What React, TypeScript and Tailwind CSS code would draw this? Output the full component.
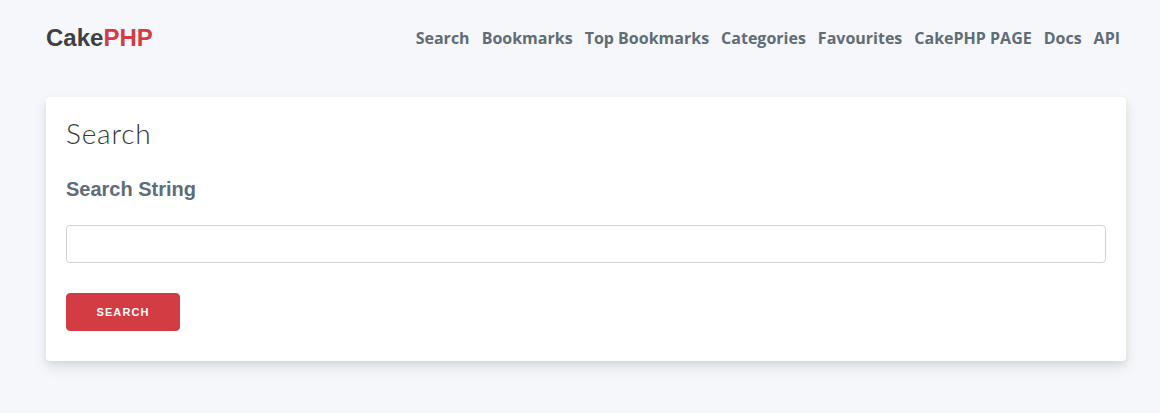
import React from "react";

export default function App() {
  const links = ["Search", "Bookmarks", "Top Bookmarks", "Categories", "Favourites", "CakePHP PAGE", "Docs", "API"];
  return (
    <div className="min-h-[413px] bg-[#f5f7fa]" style={{ fontFamily: "Lato, 'Open Sans', sans-serif" }}>
      <nav className="flex items-center justify-between pl-[46px] pr-[40px] h-[75px]">
        <a className="text-[24px] font-bold text-[#404041]" style={{ fontFamily: "'Liberation Sans', Arial, sans-serif" }}>
          Cake<span className="text-[#d33c43]">PHP</span>
        </a>
        <div className="flex items-center gap-[12px]">
          {links.map((l) => (
            <a key={l} className="text-[16px] font-bold text-[#606c76]" style={{ fontFamily: "'Open Sans', sans-serif" }}>
              {l}
            </a>
          ))}
        </div>
      </nav>
      <main className="pl-[46px] pr-[34px] pt-[22px]">
        <div className="bg-white rounded-[4px] shadow-[0_7px_14px_0_rgba(60,66,87,0.1),0_3px_6px_0_rgba(0,0,0,0.07)] px-[20px] pt-[18px] pb-[30px]">
          <h1 className="text-[28px] font-light text-[#363637] leading-[36px] tracking-[0.8px]">Search</h1>
          <h2 className="mt-[26px] text-[20px] font-bold text-[#606c76] leading-[24px]" style={{ fontFamily: "'Liberation Sans', Arial, sans-serif" }}>
            Search String
          </h2>
          <input className="mt-[24px] block w-full h-[38px] border border-[#d1d1d1] rounded-[4px] px-[10px] outline-none" />
          <button
            className="mt-[30px] block w-[114px] h-[38px] bg-[#d33c43] border border-[#d33c43] rounded-[4px] text-white text-[11px] font-bold tracking-[1.1px] uppercase"
            style={{ fontFamily: "'Liberation Sans', Arial, sans-serif" }}
          >
            Search
          </button>
        </div>
      </main>
    </div>
  );
}
